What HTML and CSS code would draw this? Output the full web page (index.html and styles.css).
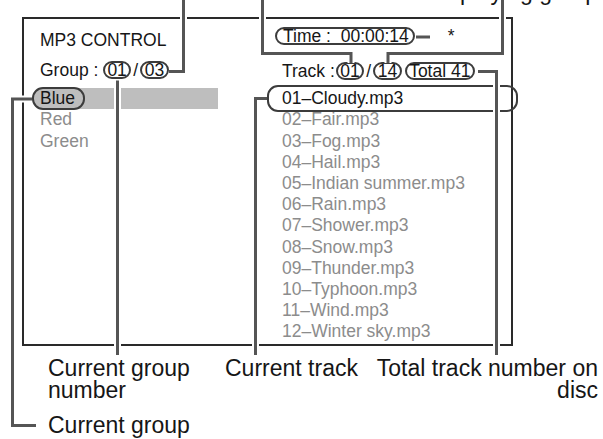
FILE: index.html
```html
<!DOCTYPE html>
<html>
<head>
  <meta charset="UTF-8">
  <title>MP3 Control</title>
  <link rel="stylesheet" href="styles.css">
</head>
<body>
  <div class="page">
    <div class="top-note">Total track number in<br>playing group</div>

    <div class="screen">
      <div class="col groups">
        <div class="title">MP3 CONTROL</div>
        <div class="info">Group :<span class="pill gap">01</span><span class="slash">/</span><span class="pill">03</span></div>
        <ul class="list group-list">
          <li class="current"><span class="tag">Blue</span></li>
          <li>Red</li>
          <li>Green</li>
        </ul>
      </div>
      <div class="col tracks">
        <div class="time"><span class="pill time-pill">Time :&nbsp; 00:00:14</span><span class="star">*</span></div>
        <div class="info">Track :<span class="pill tight">01</span><span class="slash">/</span><span class="pill">14</span><span class="pill total">Total 41</span></div>
        <ul class="list track-list">
          <li class="current">01–Cloudy.mp3</li>
          <li>02–Fair.mp3</li>
          <li>03–Fog.mp3</li>
          <li>04–Hail.mp3</li>
          <li>05–Indian summer.mp3</li>
          <li>06–Rain.mp3</li>
          <li>07–Shower.mp3</li>
          <li>08–Snow.mp3</li>
          <li>09–Thunder.mp3</li>
          <li>10–Typhoon.mp3</li>
          <li>11–Wind.mp3</li>
          <li>12–Winter sky.mp3</li>
        </ul>
      </div>
    </div>

    <div class="notes">
      <div>Current group<br>number</div>
      <div>Current track</div>
      <div class="right">Total track number on<br>disc</div>
    </div>
    <div class="notes-last">Current group</div>

    <!-- leader lines of the callouts -->
    <svg class="leaders" width="603" height="439" viewBox="0 0 603 439">
      <defs>
        <path id="l-groups" d="M183.5 0 V71.5 H169"/>
        <path id="l-track" d="M262.5 0 V53.5 H351 V63"/>
        <path id="l-intotal" d="M502.5 0 V53.5 H388 V63"/>
        <path id="l-time" d="M416 37 H430"/>
        <path id="l-groupno" d="M117.5 80.5 V355"/>
        <path id="l-group" d="M32 99 H12.5 V425.5 H36"/>
        <path id="l-current" d="M267 98.5 H255.5 V355"/>
        <path id="l-disc" d="M478 71.5 H496.5 V355"/>
      </defs>
      <g class="halo">
        <use href="#l-groups"/><use href="#l-track"/><use href="#l-intotal"/><use href="#l-time"/>
        <use href="#l-groupno"/><use href="#l-group"/><use href="#l-current"/><use href="#l-disc"/>
      </g>
      <g class="lead">
        <use href="#l-groups"/><use href="#l-track"/><use href="#l-intotal"/><use href="#l-time"/>
        <use href="#l-groupno"/><use href="#l-group"/><use href="#l-current"/><use href="#l-disc"/>
      </g>
    </svg>
  </div>
</body>
</html>
```

FILE: styles.css
```css
body {
  margin: 0;
  background: #fff;
  font-family: "Liberation Sans", Arial, sans-serif;
  color: #161616;
}

.page {
  position: relative;
  width: 603px;
  height: 439px;
  overflow: hidden;
}

/* label cut off by the top edge */
.top-note {
  position: absolute;
  right: 5px;
  top: -42px;
  font-size: 23px;
  line-height: 23px;
  text-align: right;
}

.screen {
  margin: 17px 0 0 22px;
  width: 491px;
  height: 329px;
  box-sizing: border-box;
  border: 2px solid #2a2a2a;
  padding-left: 8px;
  display: grid;
  grid-template-columns: 235px 1fr;
  font-size: 17.5px;
}

.groups {
  padding-top: 11.3px;
}
.title {
  height: 30px;
  line-height: 21.2px;
  padding-left: 8px;
}
.info {
  height: 28px;
  line-height: 21.2px;
  padding-left: 8px;
  white-space: nowrap;
}

.tracks {
  padding-top: 6.8px;
}
.time {
  height: 35px;
  line-height: 21.2px;
  padding-left: 8px;
  white-space: nowrap;
}
.tracks .info {
  height: 27.5px;
  padding-left: 15px;
}

.pill {
  display: inline-block;
  line-height: 14px;
  border: 2px solid #3c3c3c;
  border-radius: 9px;
  padding: 0 2.5px;
}
.pill.gap {
  margin-left: 4.5px;
}
.pill.tight {
  margin-left: 1px;
}
.pill.total {
  margin-left: 3px;
}
.time-pill {
  padding: 0 4px 0 6px;
}
.slash {
  margin: 0 2px;
}
.star {
  margin-left: 33px;
}

.list {
  list-style: none;
  margin: 0;
  padding: 0;
  color: #8c8c8c;
}
.list li {
  height: 21.2px;
  line-height: 21.2px;
  white-space: nowrap;
}

.group-list {
  width: 186px;
}
.group-list li {
  padding-left: 8px;
}
.group-list li.current {
  padding-left: 0;
  color: #161616;
  background: linear-gradient(#bebebe, #bebebe) no-repeat 12px 0 / calc(100% - 12px) 100%;
}
.tag {
  display: inline-block;
  margin: -1px 0;
  line-height: 19px;
  border: 2px solid #3c3c3c;
  border-radius: 11px;
  padding: 0 8px 0 6px;
  background: #bebebe;
}

.track-list li {
  position: relative;
  padding-left: 15px;
}
.track-list li.current {
  color: #161616;
}
.track-list li.current::before {
  content: "";
  position: absolute;
  left: 0;
  right: -7px;
  top: -3.3px;
  bottom: -2.5px;
  border: 2px solid #3c3c3c;
  border-radius: 11px;
}

.notes {
  display: grid;
  grid-template-columns: 177px 142px 1fr;
  margin-top: 11px;
  padding: 0 5px 0 48px;
  font-size: 23px;
  line-height: 22px;
}
.notes .right {
  text-align: right;
}
.notes-last {
  margin-top: 13px;
  padding-left: 48px;
  font-size: 23px;
  line-height: 22px;
}

.leaders {
  position: absolute;
  left: 0;
  top: 0;
  pointer-events: none;
}
.halo {
  fill: none;
  stroke: #fff;
  stroke-width: 7;
}
.lead {
  fill: none;
  stroke: #555;
  stroke-width: 3;
}
```
